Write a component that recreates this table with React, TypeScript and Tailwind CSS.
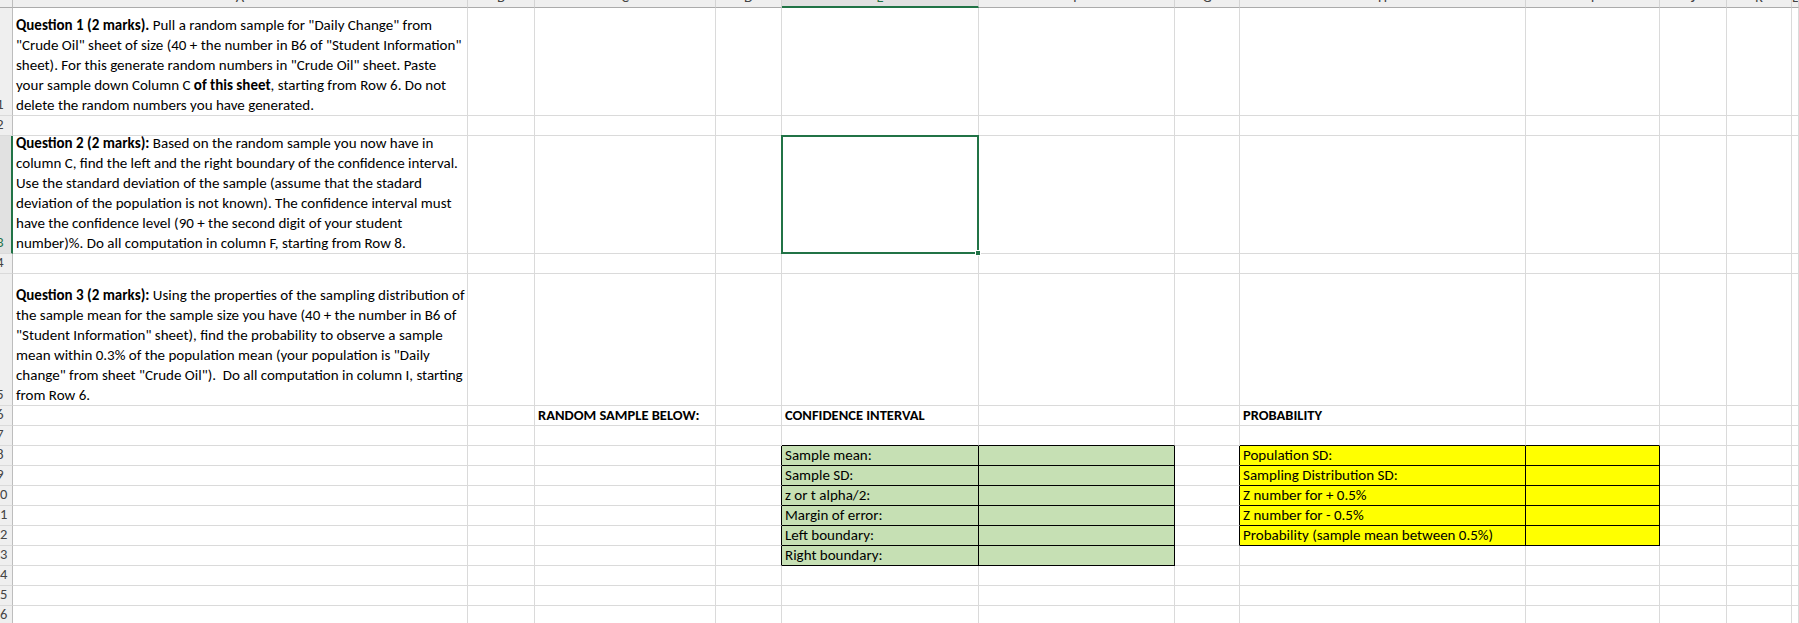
import type { ReactNode } from 'react'

const GRID =
  'grid grid-cols-[13px_455px_67px_181px_66px_197px_196px_65px_286px_134px_67px_65px_1fr] auto-rows-[100%]'
const LETTERS = ['A', 'B', 'C', 'D', 'E', 'F', 'G', 'H', 'I', 'J', 'K', 'L']

const ROW_HEIGHTS: Record<number, string> = {
  1: 'h-[108px]',
  3: 'h-[118px]',
  5: 'h-[132px]',
}

const q1 = [
  <><b>Question 1 (2 marks).</b> Pull a random sample for "Daily Change" from</>,
  <>"Crude Oil" sheet of size (40 + the number in B6 of "Student Information"</>,
  <>sheet). For this generate random numbers in "Crude Oil" sheet. Paste</>,
  <>your sample down Column C <b>of this sheet</b>, starting from Row 6. Do not</>,
  <>delete the random numbers you have generated.</>,
]

const q2 = [
  <><b>Question 2 (2 marks):</b> Based on the random sample you now have in</>,
  <>column C, find the left and the right boundary of the confidence interval.</>,
  <>Use the standard deviation of the sample (assume that the stadard</>,
  <>deviation of the population is not known). The confidence interval must</>,
  <>have the confidence level (90 + the second digit of your student</>,
  <>number)%. Do all computation in column F, starting from Row 8.</>,
]

const q3 = [
  <><b>Question 3 (2 marks):</b> Using the properties of the sampling distribution of</>,
  <>the sample mean for the sample size you have (40 + the number in B6 of</>,
  <>"Student Information" sheet), find the probability to observe a sample</>,
  <>mean within 0.3% of the population mean (your population is "Daily</>,
  <>change" from sheet "Crude Oil").&nbsp; Do all computation in column I, starting</>,
  <>from Row 6.</>,
]

const confidence = ['Sample mean:', 'Sample SD:', 'z or t alpha/2:', 'Margin of error:', 'Left boundary:', 'Right boundary:']
const probability = [
  'Population SD:',
  'Sampling Distribution SD:',
  'Z number for + 0.5%',
  'Z number for - 0.5%',
  'Probability (sample mean between 0.5%)',
]

const inGreen = (r: number, c: number) => r >= 8 && r <= 13 && (c === 5 || c === 6)
const inYellow = (r: number, c: number) => r >= 8 && r <= 12 && (c === 8 || c === 9)

function cellClass(r: number, c: number) {
  const right =
    inGreen(r, c) || inYellow(r, c) || (c === 4 && r >= 8 && r <= 13) || (c === 7 && r >= 8 && r <= 12)
      ? 'border-r-black'
      : 'border-r-[#dadada]'
  const bottom =
    inGreen(r, c) || inYellow(r, c) || (r === 7 && (c === 5 || c === 6 || c === 8 || c === 9))
      ? 'border-b-black'
      : 'border-b-[#dadada]'
  const bg = inGreen(r, c) ? 'bg-[#c6e0b4]' : inYellow(r, c) ? 'bg-[#ffff00]' : 'bg-white'
  const size = r === 6 ? 'text-[14.5px]' : 'text-[15px]'
  return `${right} ${bottom} ${bg} ${size}`
}

function content(r: number, c: number): ReactNode {
  if (c === 1 && r === 1) return q1.map((l, i) => <div key={i}>{l}</div>)
  if (c === 1 && r === 3) return q2.map((l, i) => <div key={i}>{l}</div>)
  if (c === 1 && r === 5) return q3.map((l, i) => <div key={i}>{l}</div>)
  if (r === 6 && c === 3) return <b>RANDOM SAMPLE BELOW:</b>
  if (r === 6 && c === 5) return <b>CONFIDENCE INTERVAL</b>
  if (r === 6 && c === 8) return <b>PROBABILITY</b>
  if (c === 5 && r >= 8 && r <= 13) return confidence[r - 8]
  if (c === 8 && r >= 8 && r <= 12) return probability[r - 8]
  return null
}

function Cell({ r, c }: { r: number; c: number }) {
  const selected = r === 3 && c === 5
  return (
    <div
      className={`relative flex min-h-0 flex-col justify-end whitespace-nowrap border-r border-b pl-[3px] leading-[20px] ${
        selected ? 'overflow-visible' : 'overflow-hidden'
      } ${cellClass(r, c)}`}
    >
      {content(r, c)}
      {selected && (
        <div className="absolute -top-[1px] -left-[1px] right-[-1px] bottom-[-1px] z-10 border-2 border-[#217346]">
          <div className="absolute -right-[4px] -bottom-[4px] h-[6px] w-[6px] border border-white bg-[#217346]" />
        </div>
      )}
    </div>
  )
}

function RowHeader({ r }: { r: number }) {
  const sel = r === 3
  return (
    <div
      className={`flex min-h-0 flex-col justify-end overflow-hidden border-b border-b-[#dadada] text-[14.5px] ${
        sel ? 'border-r-2 border-r-[#217346] bg-[#e1e1e1] text-[#217346]' : 'border-r border-r-[#bdbdbd] bg-[#efefef] text-[#444]'
      }`}
    >
      <div className="-ml-[13px] w-[26px] pb-[1px] text-center leading-[20px]">{r}</div>
    </div>
  )
}

export default function App() {
  const rows = Array.from({ length: 16 }, (_, i) => i + 1)
  return (
    <div className="h-[623px] w-[1799px] overflow-hidden bg-white font-['Carlito','Lato',sans-serif] text-black">
      <div className={`${GRID} relative z-20 h-[8px] text-[14.5px]`}>
        <div className="border-r border-b border-r-[#bdbdbd] border-b-[#ababab] bg-[#efefef]" />
        {LETTERS.map((l) => (
          <div
            key={l}
            className={`min-h-0 overflow-hidden border-r border-r-[#d4d4d4] ${
              l === 'E' ? 'border-b-2 border-b-[#217346] bg-[#e1e1e1] text-[#217346]' : 'border-b border-b-[#ababab] bg-[#efefef] text-[#444]'
            }`}
          >
            <div className="-mt-[12px] flex h-[20px] items-center justify-center">{l}</div>
          </div>
        ))}
      </div>
      {rows.map((r) => (
        <div key={r} className={`${GRID} ${ROW_HEIGHTS[r] ?? 'h-[20px]'}`}>
          <RowHeader r={r} />
          {LETTERS.map((_, i) => (
            <Cell key={i} r={r} c={i + 1} />
          ))}
        </div>
      ))}
    </div>
  )
}
